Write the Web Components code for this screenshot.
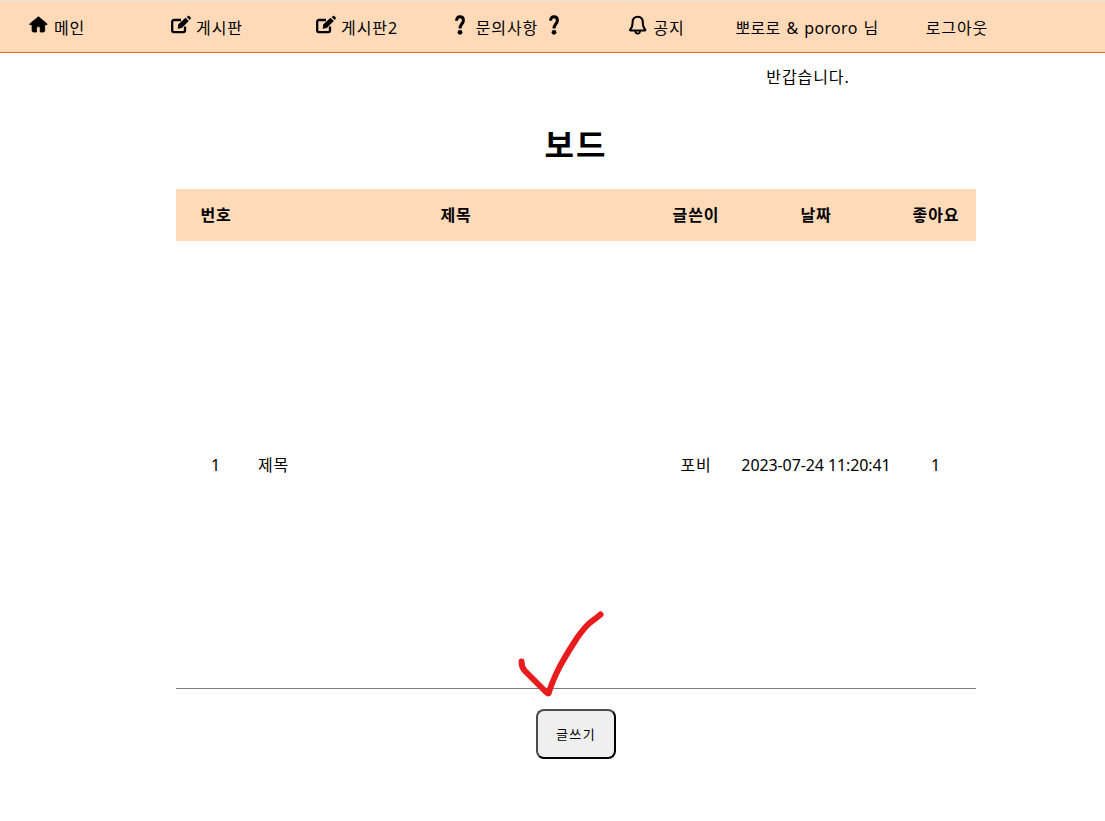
<!DOCTYPE html>
<html lang="ko">
<head>
<meta charset="utf-8">
<title>보드</title>
<style>
  html, body { margin: 0; background: #fff; }
  body { font: 16px/24px "Noto Sans", "Noto Sans CJK KR", sans-serif; letter-spacing: .9px; color: #000; }
</style>
</head>
<body>

<app-nav>
  <nav-item><app-icon name="home"></app-icon>메인</nav-item>
  <nav-item><app-icon name="edit"></app-icon>게시판</nav-item>
  <nav-item><app-icon name="edit"></app-icon>게시판2</nav-item>
  <nav-item><app-icon name="question"></app-icon>문의사항<app-icon name="question"></app-icon></nav-item>
  <nav-item><app-icon name="bell"></app-icon>공지</nav-item>
  <nav-item tight>뽀로로 &amp; pororo 님</nav-item>
  <nav-item>로그아웃</nav-item>
</app-nav>

<app-greeting>반갑습니다.</app-greeting>

<board-page heading="보드">
  <board-table>
    <board-row head>
      <board-cell>번호</board-cell>
      <board-cell>제목</board-cell>
      <board-cell>글쓴이</board-cell>
      <board-cell>날짜</board-cell>
      <board-cell>좋아요</board-cell>
    </board-row>
    <board-row>
      <board-cell>1</board-cell>
      <board-cell left>제목</board-cell>
      <board-cell>포비</board-cell>
      <board-cell date>2023-07-24 11:20:41</board-cell>
      <board-cell>1</board-cell>
    </board-row>
  </board-table>
  <write-button>글쓰기</write-button>
</board-page>

<check-mark></check-mark>

<script>
// icons used by the nav, all 21px high, drawn from the top of the box
const ICONS = {
  home: { width: 20, svg: `<path fill="currentColor" stroke="currentColor" stroke-width=".8" stroke-linejoin="round" d="M9.500 1.700 .8 8.800c-.4.400-.1.900.4.900h1.900v5.800c0 1 .7 1.500 1.500 1.500h3v-3.600c0-2.600 3.600-2.600 3.600 0v3.600h3c.8 0 1.500-.5 1.500-1.500V9.700h1.900c.5 0 .8-.5.4-.9z"/>` },
  edit: { width: 20, svg: `<path fill="none" stroke="currentColor" stroke-width="2.300" d="M14 11.500V15.500a1.600 1.600 0 0 1-1.600 1.600H2.800A1.600 1.600 0 0 1 1.200 15.500V6.600A1.600 1.600 0 0 1 2.800 5H10"/><path fill="currentColor" d="M6.700 13.800 7.200 9.500 14.500 2.700 17.800 6 10.800 13.100zM15.700 1.900 17 1c.4-.3.8-.3 1.100 0l1.700 1.500c.3.300.3.700 0 1l-1.200 1.400z"/>` },
  question: { width: 10, gap: 6, svg: `<path fill="none" stroke="currentColor" stroke-width="3" d="M1.600 5.800C1.600 3 3 1.800 5 1.800c2.200 0 3.400 1.600 3.400 3.600C8.400 8.600 5 9 5 13.400"/><circle fill="currentColor" cx="5" cy="17.300" r="2.400"/>` },
  bell: { width: 19, svg: `<path fill="none" stroke="currentColor" stroke-width="2" stroke-linejoin="round" d="M8.700 1.700C5.200 1.700 3.600 4.200 3.600 7.400c0 3.400-.6 5.200-2.400 7-.4.400-.2 1 .4 1h14.200c.6 0 .8-.6.400-1-1.800-1.800-2.400-3.600-2.400-7 0-3.200-1.600-5.700-5.100-5.700z"/><path fill="none" stroke="currentColor" stroke-width="1.800" d="M6.300 15.800c0 1.800 1 2.800 2.400 2.800s2.400-1 2.400-2.800"/>` }
};

class AppIcon extends HTMLElement {
  connectedCallback() {
    const icon = ICONS[this.getAttribute('name')];
    const shadow = this.attachShadow({ mode: 'open' });
    shadow.innerHTML = `
      <style>
        :host { display: inline-flex; flex: none; position: relative; top: -3px; margin: 0 ${icon.gap || 0}px; }
        svg { display: block; overflow: visible; }
      </style>
      <svg width="${icon.width}" height="21" viewBox="0 0 ${icon.width} 21" aria-hidden="true">${icon.svg}</svg>`;
  }
}
customElements.define('app-icon', AppIcon);

class AppNav extends HTMLElement {
  constructor() {
    super();
    this.attachShadow({ mode: 'open' }).innerHTML = `
      <style>
        :host {
          display: flex;
          height: 51px;
          background: #ffdab9;
          border-top: 1px solid #ebe2da;
          border-bottom: 1px solid #d2691e;
        }
        .items { display: flex; margin-left: -18px; }
      </style>
      <div class="items"><slot></slot></div>`;
  }
}
customElements.define('app-nav', AppNav);

class NavItem extends HTMLElement {
  constructor() {
    super();
    this.attachShadow({ mode: 'open' }).innerHTML = `
      <style>
        :host {
          display: flex;
          align-items: center;
          justify-content: center;
          gap: 5px;
          width: 150px;
          padding-top: 3px;
          box-sizing: border-box;
          white-space: nowrap;
        }
        :host([tight]) { letter-spacing: .3px; word-spacing: 1.500px; }
      </style>
      <slot></slot>`;
  }
}
customElements.define('nav-item', NavItem);

class AppGreeting extends HTMLElement {
  constructor() {
    super();
    this.attachShadow({ mode: 'open' }).innerHTML = `
      <style>
        :host { display: block; width: 150px; margin-left: 733px; padding-top: 12px; text-align: center; }
      </style>
      <slot></slot>`;
  }
}
customElements.define('app-greeting', AppGreeting);

class BoardPage extends HTMLElement {
  connectedCallback() {
    const shadow = this.attachShadow({ mode: 'open' });
    shadow.innerHTML = `
      <style>
        :host { display: flex; flex-direction: column; align-items: center; width: 800px; margin-left: 176px; }
        h2 { margin: 0; padding-top: 32px; height: 68px; font-size: 32px; line-height: 48px; font-weight: 700; letter-spacing: 2px; }
      </style>
      <h2>${this.getAttribute('heading')}</h2>
      <slot></slot>`;
  }
}
customElements.define('board-page', BoardPage);

class BoardTable extends HTMLElement {
  constructor() {
    super();
    this.attachShadow({ mode: 'open' }).innerHTML = `
      <style>
        :host {
          display: grid;
          grid-template-rows: 52px 447px;
          width: 100%;
          border-bottom: 1px solid #808080;
        }
      </style>
      <slot></slot>`;
  }
}
customElements.define('board-table', BoardTable);

class BoardRow extends HTMLElement {
  constructor() {
    super();
    this.attachShadow({ mode: 'open' }).innerHTML = `
      <style>
        :host {
          display: grid;
          grid-template-columns: 80px 400px 80px 160px 80px;
          align-items: center;
        }
        :host([head]) { background: #ffdab9; font-weight: 700; }
      </style>
      <slot></slot>`;
  }
}
customElements.define('board-row', BoardRow);

class BoardCell extends HTMLElement {
  constructor() {
    super();
    this.attachShadow({ mode: 'open' }).innerHTML = `
      <style>
        :host { display: block; text-align: center; white-space: nowrap; }
        :host([left]) { text-align: left; padding-left: 2px; }
        :host([date]) { letter-spacing: -.1px; }
      </style>
      <slot></slot>`;
  }
}
customElements.define('board-cell', BoardCell);

class WriteButton extends HTMLElement {
  constructor() {
    super();
    this.attachShadow({ mode: 'open' }).innerHTML = `
      <style>
        :host { display: block; margin-top: 20px; }
        button {
          display: block;
          width: 80px;
          height: 50px;
          padding: 0;
          font: 13px/18px "Noto Sans", "Noto Sans CJK KR", sans-serif;
          letter-spacing: 1.300px;
          color: #000;
          background: #efefef;
          border: 2px solid;
          border-color: #4a4a4a #000 #000 #4a4a4a;
          border-radius: 8px;
        }
      </style>
      <button type="button"><slot></slot></button>`;
  }
}
customElements.define('write-button', WriteButton);

// hand drawn mark that lies over the table line and the button
class CheckMark extends HTMLElement {
  constructor() {
    super();
    this.attachShadow({ mode: 'open' }).innerHTML = `
      <style>
        :host { position: absolute; left: 515px; top: 608px; width: 95px; height: 92px; }
        svg { display: block; }
      </style>
      <svg width="95" height="92" viewBox="0 0 95 92" aria-hidden="true">
        <path fill="none" stroke="#e81c1c" stroke-width="6" stroke-linecap="round" stroke-linejoin="round"
          d="M6.500 53.500C6.500 58 8 61 10 63L31 84C33 86 33.500 86 34 84C37 74 41 66 45 58C50 49 56 39 62 30C66 24.500 70 19 73 16.500C77 13 81 10.500 85.500 6.500"/>
      </svg>`;
  }
}
customElements.define('check-mark', CheckMark);
</script>
</body>
</html>
